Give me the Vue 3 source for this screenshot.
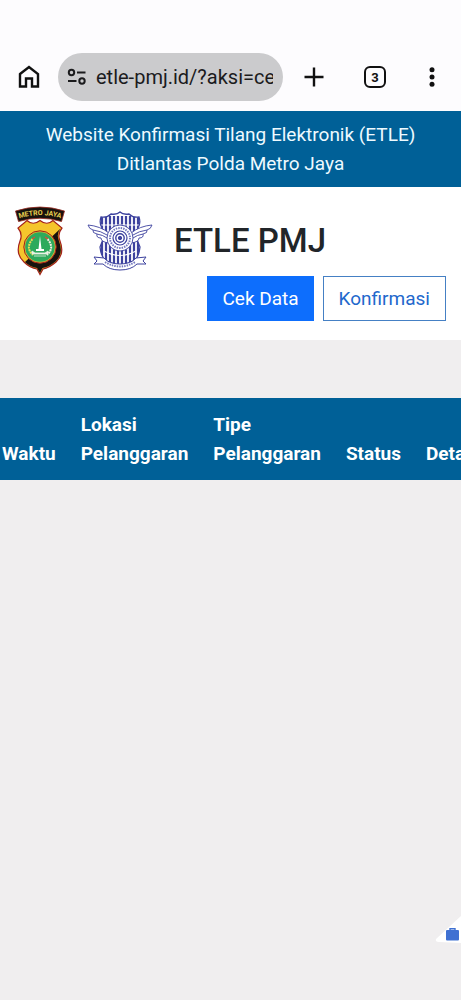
<template>
  <div class="screen">
    <div class="browser-bar">
      <button class="icon-button home" type="button" aria-label="Home">
        <svg width="22" height="24" viewBox="0 0 22 24">
          <path d="M2 9 L11 2 L20 9 V21.5 H14 V13.5 H8 V21.5 H2 Z" fill="none" stroke="#111" stroke-width="2.4" />
        </svg>
      </button>
      <div class="address">
        <svg width="20" height="18" viewBox="0 0 20 18" fill="none" stroke="#1b1b1d" stroke-width="2">
          <circle cx="4.5" cy="4.5" r="2.7" />
          <path d="M10 4.5 H18.5 M1 13 H9.5" />
          <circle cx="15" cy="13" r="2.7" />
        </svg>
        <input v-model="url" type="text" aria-label="Address" readonly />
      </div>
      <button class="icon-button plus" type="button" aria-label="New tab">
        <svg width="20" height="20" viewBox="0 0 20 20">
          <path d="M10 0.5 V19.5 M0.5 10 H19.5" stroke="#111" stroke-width="2.4" />
        </svg>
      </button>
      <button class="icon-button tabs" type="button" aria-label="Tabs">3</button>
      <button class="icon-button more" type="button" aria-label="Menu">
        <svg width="6" height="20" viewBox="0 0 6 20" fill="#111">
          <circle cx="3" cy="2.7" r="2.5" />
          <circle cx="3" cy="10" r="2.5" />
          <circle cx="3" cy="17.3" r="2.5" />
        </svg>
      </button>
    </div>

    <div class="banner">
      Website Konfirmasi Tilang Elektronik (ETLE)<br />
      Ditlantas Polda Metro Jaya
    </div>

    <header class="site-header">
      <div class="brand">
        <!-- Polda Metro Jaya shield -->
        <svg class="shield" width="50" height="70" viewBox="0 0 50 70">
          <path d="M0.5 5 Q25 -3 49.5 5 L46.5 15.5 Q25 9 3.5 15.5 Z" fill="#17120e" stroke="#9c2a20" stroke-width="0.8" />
          <path id="ribbonText" d="M3 12.6 Q25 5.6 47 12.6" fill="none" />
          <text font-family="Roboto, sans-serif" font-size="7" font-weight="700" fill="#e8ce50" text-anchor="middle">
            <textPath href="#ribbonText" startOffset="50%">METRO JAYA</textPath>
          </text>
          <path d="M12 14.5 Q18 20 25 14.5 Q32 20 38 14.5 L47 22 Q42 28 45 35 Q50 48 41 56 Q34 62 28 63 L25 68.5 L22 63 Q15 62 9 56 Q0 48 5 35 Q8 28 3 22 Z" fill="#f5c52c" stroke="#a3211b" stroke-width="1.2" />
          <path d="M45.5 22.5 Q41 28 44 35 Q49 48 40.5 55.5 Q34 61 27.5 62 L25 67 L22 62 Q15 61 10 56 Z" fill="#17120e" />
          <circle cx="25" cy="41" r="16.2" fill="#d8b332" stroke="#a3211b" />
          <circle cx="25" cy="41" r="14.8" fill="#2daa5c" />
          <path d="M17.5 33 Q10 42 18 49" fill="none" stroke="#eadb58" stroke-width="2" stroke-dasharray="2 0.8" />
          <path d="M32.5 33 Q40 42 32 49" fill="none" stroke="#f4eee2" stroke-width="2" stroke-dasharray="2 0.8" />
          <path d="M17 33 L20 31 M33 33 L30 31" stroke="#d94d36" stroke-width="1.5" />
          <path d="M25 30 L26.5 43 H29 V45 H21 V43 H23.5 Z" fill="#fff" />
          <path d="M17 45 L20 47 H30 L33 45 V48 H17 Z M19 50 H31" fill="#e8f1e5" stroke="#e8f1e5" stroke-width="0.8" />
        </svg>
        <!-- Traffic corps emblem -->
        <svg class="emblem" width="66" height="60" viewBox="0 0 66 60" fill="none" stroke="#3d429e">
          <clipPath id="emblemShield">
            <path d="M14 6 Q20 7 24 3 Q30 4 33 1 Q36 4 42 3 Q46 7 52 6 Q54 12 51 17 Q48 27 53 36 Q52 46 47 50 L33 55 L19 50 Q14 46 13 36 Q18 27 15 17 Q12 12 14 6 Z" />
          </clipPath>
          <g clip-path="url(#emblemShield)">
            <rect width="66" height="60" fill="#fff" stroke="none" />
            <path v-for="x in stripes" :key="x" :d="`M${x} 5 V53`" stroke-width="2.2" />
            <path d="M12 14 H54" stroke="#fff" stroke-width="1.2" />
            <path d="M17 40 Q33 49 49 40" stroke="#fff" stroke-width="1.2" />
          </g>
          <path d="M14 6 Q20 7 24 3 Q30 4 33 1 Q36 4 42 3 Q46 7 52 6 Q54 12 51 17 Q48 27 53 36 Q52 46 47 50 L33 55 L19 50 Q14 46 13 36 Q18 27 15 17 Q12 12 14 6 Z" stroke-width="1.3" />
          <g fill="#fff" stroke-width="0.9">
            <path d="M22 22 Q13 15 1 14 Q2 18 6 19 Q5 22 10 23 Q9 27 14 27 Q14 31 22 32 Z" />
            <path d="M44 22 Q53 15 65 14 Q64 18 60 19 Q61 22 56 23 Q57 27 52 27 Q52 31 44 32 Z" />
            <path d="M6 19 Q14 20 20 24 M10 23 Q16 24 20 27 M60 19 Q52 20 46 24 M56 23 Q50 24 46 27" />
          </g>
          <circle cx="33" cy="27" r="13" fill="#fff" stroke-width="0.9" />
          <circle cx="33" cy="27" r="10" stroke-width="2" stroke-dasharray="1.5 1" stroke="#7478bf" />
          <circle cx="33" cy="27" r="7" stroke-width="1.2" />
          <circle cx="33" cy="27" r="4.2" stroke-width="1.4" />
          <circle cx="33" cy="27" r="1.7" fill="#3d429e" />
          <path d="M7 46 L17 47 Q22 53 33 53 Q44 53 49 47 L59 46 L56 50 L59 53 L50 53 Q44 59 33 59 Q22 59 16 53 L7 53 L10 50 Z" fill="#fff" stroke-width="1" />
          <path d="M18 51 Q33 60 48 51" stroke-width="2" stroke-dasharray="1.5 1" stroke="#7478bf" />
        </svg>
        <h1>ETLE PMJ</h1>
      </div>
      <nav class="actions">
        <button class="btn btn-primary" type="button">Cek Data</button>
        <button class="btn btn-outline" type="button">Konfirmasi</button>
      </nav>
    </header>

    <main class="results">
      <table>
        <thead>
          <tr>
            <th scope="col">Waktu</th>
            <th scope="col">Lokasi<br />Pelanggaran</th>
            <th scope="col">Tipe<br />Pelanggaran</th>
            <th scope="col">Status</th>
            <th scope="col">Detail</th>
          </tr>
        </thead>
      </table>
    </main>

    <button class="floating" type="button" aria-label="Briefcase">
      <svg width="26" height="30" viewBox="0 0 26 30">
        <path d="M26 2 L1 25 Q0 28 4 28 L26 29 Z" fill="#fff" />
        <path d="M15 17 V14.7 H20 V17" fill="none" stroke="#3f70d2" stroke-width="1.4" />
        <rect x="11" y="16" width="13" height="10.5" rx="1" fill="#3f70d2" />
      </svg>
    </button>
  </div>
</template>

<script setup>
import { ref } from 'vue';

const url = ref('etle-pmj.id/?aksi=cek');

// x positions of the vertical stripes on the emblem
const stripes = [15, 19, 23, 27, 31, 35, 39, 43, 47, 51];
</script>

<style>
body {
  margin: 0;
  background: #f0eeef;
}
</style>

<style scoped>
.screen {
  position: relative;
  min-height: 100vh;
  overflow: hidden;
  background: #f0eeef;
  color: #212529;
  font-family: Roboto, sans-serif;
  font-size: 19px;
  line-height: 29px;
}

button {
  margin: 0;
  padding: 0;
  border: 0;
  background: none;
  font-family: inherit;
}

.browser-bar {
  display: flex;
  align-items: center;
  gap: 18px;
  padding: 53px 26px 10px 18px;
  background: #fdfcfe;
}

.icon-button {
  display: flex;
  flex: none;
  align-items: center;
  justify-content: center;
  color: #111;
}

.address {
  display: flex;
  flex: 1;
  align-items: center;
  gap: 9px;
  box-sizing: border-box;
  min-width: 0;
  height: 48px;
  padding: 0 10px 0 9px;
  border-radius: 24px;
  background: #cbcbcd;
}

.address svg {
  flex: none;
}

.address input {
  flex: 1;
  min-width: 0;
  padding: 0;
  border: 0;
  outline: 0;
  background: none;
  color: #1b1b1d;
  font-family: inherit;
  font-size: 20px;
  line-height: 28px;
}

.plus {
  width: 26px;
}

.tabs {
  box-sizing: border-box;
  width: 22px;
  height: 22px;
  margin: 0 25px 0 19px;
  border: 2px solid #111;
  border-radius: 6px;
  font-size: 13px;
  font-weight: 700;
}

.more {
  width: 6px;
}

.banner {
  padding: 9px 12px;
  background: #006097;
  color: #eefaff;
  text-align: center;
}

.site-header {
  padding: 19px 15px;
  background: #fff;
}

.brand {
  display: flex;
  align-items: center;
}

.shield {
  margin-right: 22px;
}

.emblem {
  margin-right: 21px;
}

h1 {
  margin: 0;
  font-size: 33px;
  font-weight: 500;
  line-height: 40px;
}

.actions {
  display: flex;
  justify-content: flex-end;
  gap: 9px;
}

.btn {
  padding: 7px 14px;
  border: 1px solid #0d6efd;
  font-size: 19px;
  line-height: 29px;
}

.btn-primary {
  background: #0d6efd;
  color: #fff;
}

.btn-outline {
  padding: 7px 15px;
  border-color: #4580c4;
  color: #2268cc;
}

.results {
  margin-top: 58px;
  overflow: hidden;
}

table {
  width: 100%;
  border-collapse: collapse;
  background: #006097;
  color: #fff;
}

th {
  padding: 12px 12px 12px 13px;
  font-weight: 700;
  text-align: left;
  vertical-align: bottom;
  white-space: nowrap;
}

th:first-child {
  padding-left: 2px;
}

.floating {
  position: absolute;
  top: 914px;
  right: 0;
}

.floating svg {
  display: block;
}
</style>
